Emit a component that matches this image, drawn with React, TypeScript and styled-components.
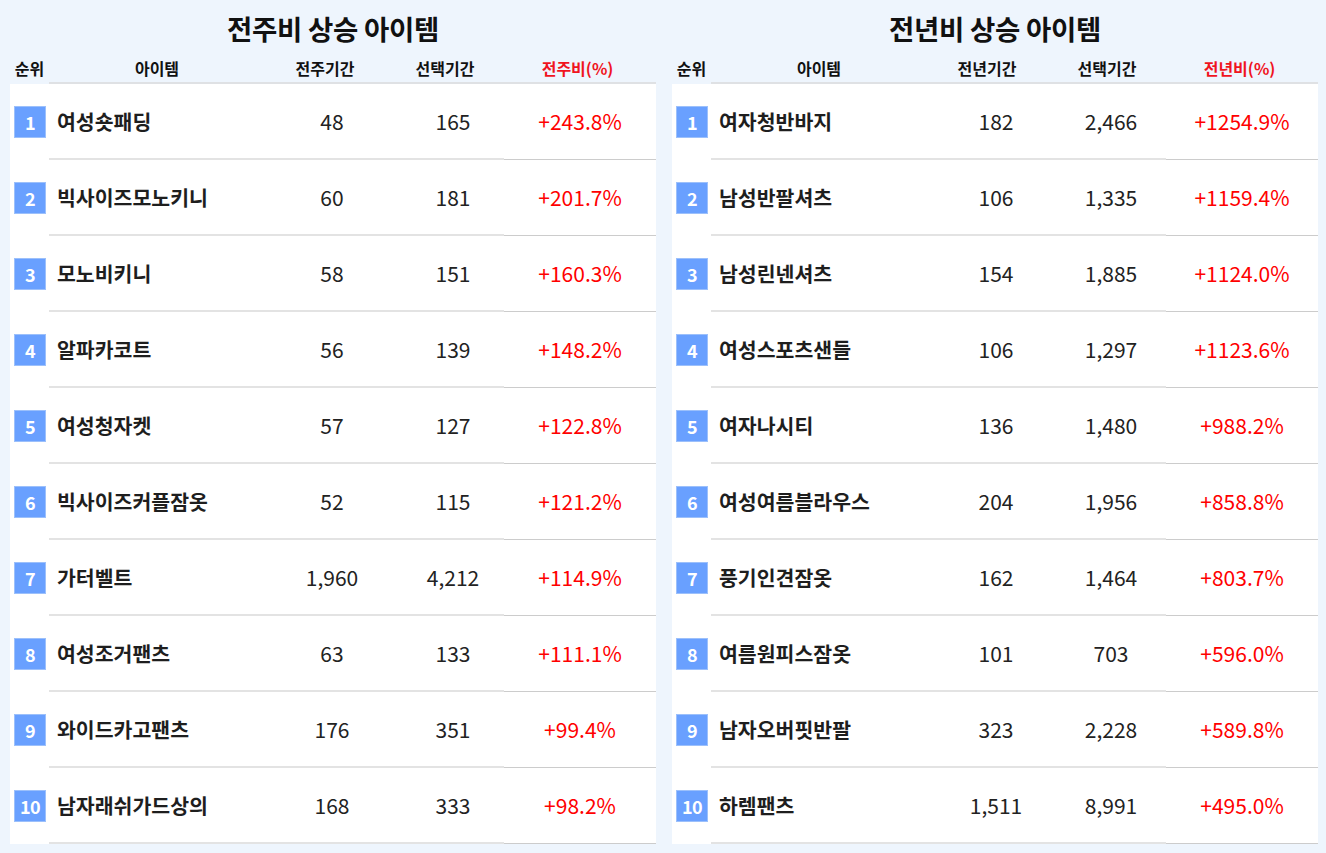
import { Fragment } from 'react';
import styled, { createGlobalStyle } from 'styled-components';

type Row = { name: string; prev: string; cur: string; rate: string };

const weekly: Row[] = [
  { name: '여성숏패딩', prev: '48', cur: '165', rate: '+243.8%' },
  { name: '빅사이즈모노키니', prev: '60', cur: '181', rate: '+201.7%' },
  { name: '모노비키니', prev: '58', cur: '151', rate: '+160.3%' },
  { name: '알파카코트', prev: '56', cur: '139', rate: '+148.2%' },
  { name: '여성청자켓', prev: '57', cur: '127', rate: '+122.8%' },
  { name: '빅사이즈커플잠옷', prev: '52', cur: '115', rate: '+121.2%' },
  { name: '가터벨트', prev: '1,960', cur: '4,212', rate: '+114.9%' },
  { name: '여성조거팬츠', prev: '63', cur: '133', rate: '+111.1%' },
  { name: '와이드카고팬츠', prev: '176', cur: '351', rate: '+99.4%' },
  { name: '남자래쉬가드상의', prev: '168', cur: '333', rate: '+98.2%' },
];

const yearly: Row[] = [
  { name: '여자청반바지', prev: '182', cur: '2,466', rate: '+1254.9%' },
  { name: '남성반팔셔츠', prev: '106', cur: '1,335', rate: '+1159.4%' },
  { name: '남성린넨셔츠', prev: '154', cur: '1,885', rate: '+1124.0%' },
  { name: '여성스포츠샌들', prev: '106', cur: '1,297', rate: '+1123.6%' },
  { name: '여자나시티', prev: '136', cur: '1,480', rate: '+988.2%' },
  { name: '여성여름블라우스', prev: '204', cur: '1,956', rate: '+858.8%' },
  { name: '풍기인견잠옷', prev: '162', cur: '1,464', rate: '+803.7%' },
  { name: '여름원피스잠옷', prev: '101', cur: '703', rate: '+596.0%' },
  { name: '남자오버핏반팔', prev: '323', cur: '2,228', rate: '+589.8%' },
  { name: '하렘팬츠', prev: '1,511', cur: '8,991', rate: '+495.0%' },
];

const GlobalStyle = createGlobalStyle`
  html, body {
    margin: 0;
    padding: 0;
    background: #eef5fd;
    font-family: 'Noto Sans CJK KR', 'Noto Sans', sans-serif;
  }
`;

const Page = styled.div`
  display: flex;
  gap: 16px;
  padding: 0 8px 0 10px;
  width: 1326px;
  height: 853px;
  box-sizing: border-box;
`;

const Panel = styled.section`
  width: 646px;
  display: flex;
  flex-direction: column;
`;

const Title = styled.h2`
  margin: 0;
  height: 55px;
  display: flex;
  align-items: center;
  justify-content: center;
  font-size: 27.5px;
  font-weight: 700;
  color: #111;
  letter-spacing: -0.3px;
`;

const Grid = styled.div`
  display: grid;
  grid-template-columns: 39px 213px 140px 102px 152px;
`;

// $shift moves the label off the cell centre (px, negative = left)
const HeadCell = styled.div<{ $first?: boolean; $accent?: boolean; $shift?: number }>`
  height: 26px;
  padding-bottom: 1px;
  display: flex;
  align-items: center;
  justify-content: center;
  font-size: 16px;
  font-weight: 700;
  color: ${(p) => (p.$accent ? '#f0141e' : '#111')};
  border-bottom: ${(p) => (p.$first ? 'none' : '2px solid #dfe1e4')};
  padding-left: ${(p) => Math.max(0, (p.$shift ?? 0) * 2)}px;
  padding-right: ${(p) => Math.max(0, -(p.$shift ?? 0) * 2)}px;
`;

const Cell = styled.div<{ $accent?: boolean; $left?: boolean; $shift?: number }>`
  height: 74px;
  background: #fff;
  display: flex;
  align-items: center;
  justify-content: ${(p) => (p.$left ? 'flex-start' : 'center')};
  padding-left: ${(p) => (p.$left ? 8 : Math.max(0, (p.$shift ?? 0) * 2))}px;
  padding-right: ${(p) => Math.max(0, -(p.$shift ?? 0) * 2)}px;
  font-size: 21px;
  color: ${(p) => (p.$accent ? '#ff0000' : '#222')};
  border-bottom: ${(p) => (p.$accent ? '1px solid #cccccc' : '2px solid #e3e3e3')};
  padding-bottom: ${(p) => (p.$accent ? '1px' : '0')};
`;

const RankCell = styled.div`
  height: 76px;
  background: #fff;
  display: flex;
  align-items: center;
  justify-content: flex-start;
  padding-left: 4px;
`;

const Badge = styled.span`
  width: 32px;
  height: 32px;
  box-sizing: border-box;
  border: 1px solid #9cc0fb;
  background: #69a0ff;
  color: #fff;
  font-size: 18px;
  font-weight: 700;
  display: flex;
  align-items: center;
  justify-content: center;
  letter-spacing: -0.5px;
`;

const Name = styled.span`
  font-size: 20.5px;
  font-weight: 700;
  color: #1e1e1e;
`;

type Props = {
  title: string;
  unit: string;
  rows: Row[];
  prevShift?: number;
  curShift?: number;
};

function RankTable({ title, unit, rows, prevShift = 0, curShift = 0 }: Props) {
  return (
    <Panel>
      <Title>{title}</Title>
      <Grid>
        <HeadCell $first>순위</HeadCell>
        <HeadCell $shift={1.5}>아이템</HeadCell>
        <HeadCell $shift={-7}>{unit}기간</HeadCell>
        <HeadCell $shift={-8}>선택기간</HeadCell>
        <HeadCell $accent $shift={-2.5}>
          {unit}비(%)
        </HeadCell>
        {rows.map((r, i) => (
          <Fragment key={r.name}>
            <RankCell>
              <Badge>{i + 1}</Badge>
            </RankCell>
            <Cell $left>
              <Name>{r.name}</Name>
            </Cell>
            <Cell $shift={prevShift}>{r.prev}</Cell>
            <Cell $shift={curShift}>{r.cur}</Cell>
            <Cell $accent>{r.rate}</Cell>
          </Fragment>
        ))}
      </Grid>
    </Panel>
  );
}

export default function App() {
  return (
    <>
      <GlobalStyle />
      <Page>
        <RankTable title="전주비 상승 아이템" unit="전주" rows={weekly} />
        <RankTable
          title="전년비 상승 아이템"
          unit="전년"
          rows={yearly}
          prevShift={2}
          curShift={-4}
        />
      </Page>
    </>
  );
}
